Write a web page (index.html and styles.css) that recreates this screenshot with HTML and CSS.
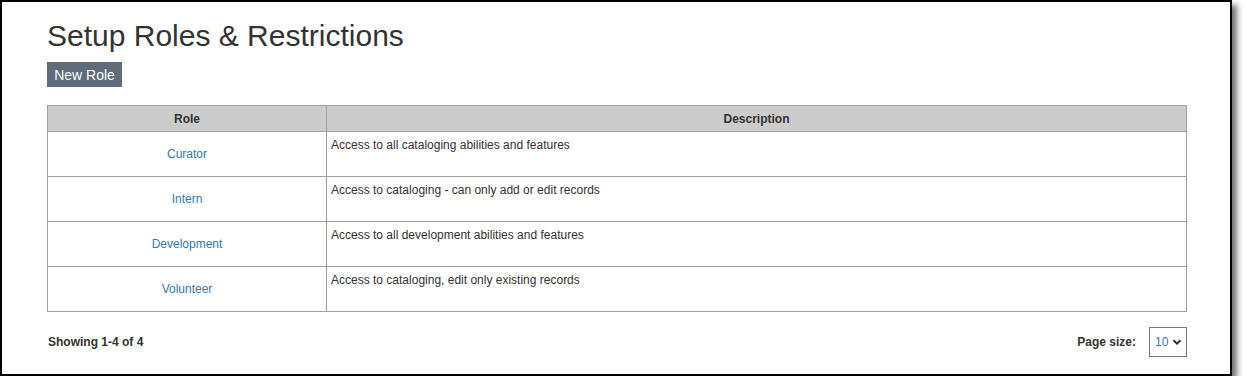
FILE: index.html
```html
<!DOCTYPE html>
<html lang="en">
<head>
<meta charset="UTF-8" />
<title>Setup Roles &amp; Restrictions</title>
<link rel="stylesheet" href="styles.css">
</head>
<body>
  <div class="frame">
    <h1 class="page-title">Setup Roles &amp; Restrictions</h1>
    <button class="btn-new">New Role</button>

    <table class="roles">
      <thead>
        <tr>
          <th class="col-role">Role</th>
          <th>Description</th>
        </tr>
      </thead>
      <tbody>
        <tr>
          <td class="role"><a href="#">Curator</a></td>
          <td class="desc">Access to all cataloging abilities and features</td>
        </tr>
        <tr>
          <td class="role"><a href="#">Intern</a></td>
          <td class="desc">Access to cataloging - can only add or edit records</td>
        </tr>
        <tr>
          <td class="role"><a href="#">Development</a></td>
          <td class="desc">Access to all development abilities and features</td>
        </tr>
        <tr>
          <td class="role"><a href="#">Volunteer</a></td>
          <td class="desc">Access to cataloging, edit only existing records</td>
        </tr>
      </tbody>
    </table>

    <div class="pager">
      <span class="count">Showing 1-4 of 4</span>
      <div class="size">
        <span class="size-label">Page size:</span>
        <div class="size-select">
          <span>10</span>
          <svg viewBox="0 0 10 10" aria-hidden="true">
            <path d="M1.5 3.2 5 6.7 8.5 3.2" fill="none" stroke="#333" stroke-width="2" />
          </svg>
        </div>
      </div>
    </div>
  </div>
</body>
</html>
```

FILE: styles.css
```css
* {
  margin: 0;
  padding: 0;
  box-sizing: border-box;
}

body {
  background: #fff;
  font-family: Arial, "Liberation Sans", sans-serif;
  color: #333;
}

/* Screenshot frame with drop shadow */
.frame {
  width: 1232px;
  height: 376px;
  border: 2px solid #000;
  box-shadow: 5px 5px 6px rgba(0, 0, 0, 0.55);
  padding: 16px 43px 0 45px;
  background: #fff;
}

.page-title {
  font-size: 30px;
  font-weight: normal;
  line-height: 36px;
  color: #333;
}

.btn-new {
  display: block;
  margin-top: 8px;
  width: 75px;
  height: 25px;
  background: #5e6b7b;
  color: #fff;
  border: none;
  font-family: inherit;
  font-size: 14px;
}

.roles {
  margin-top: 18px;
  width: 1140px;
  border-collapse: collapse;
  font-size: 12px;
}

.roles th,
.roles td {
  border: 1px solid #a0a0a0;
}

.roles th {
  background: #cccccc;
  height: 26px;
  font-weight: bold;
  color: #333;
}

.roles .col-role {
  width: 279px;
}

.roles td {
  height: 45px;
}

.role {
  text-align: center;
  vertical-align: middle;
}

.role a {
  color: #337ab7;
  text-decoration: none;
}

.desc {
  vertical-align: top;
  padding: 6px 4px;
  color: #333;
}

.pager {
  width: 1140px;
  margin-top: 15px;
  display: flex;
  justify-content: space-between;
  align-items: center;
  font-size: 12px;
  font-weight: bold;
}

.count {
  padding-left: 1px;
}

.size {
  display: flex;
  align-items: center;
  gap: 13px;
}

.size-select {
  width: 38px;
  height: 30px;
  border: 1px solid #777;
  display: flex;
  align-items: center;
  gap: 4px;
  padding-left: 5px;
  font-weight: normal;
  color: #337ab7;
}

.size-select svg {
  width: 10px;
  height: 10px;
}
```
